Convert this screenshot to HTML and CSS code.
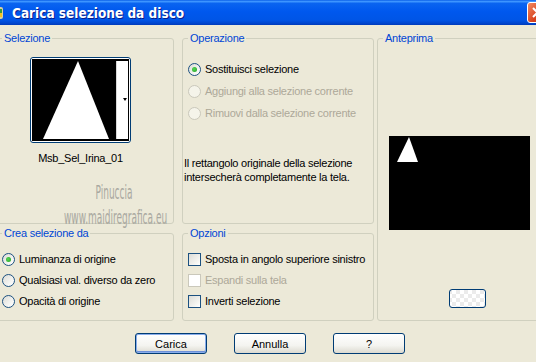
FILE: index.html
```html
<!DOCTYPE html>
<html>

<head>
    <title>Carica selezione da disco</title>
    <link rel="stylesheet" href="styles.css">
</head>

<body>
    <div class="titlebar">
        <svg class="app-icon" width="16" height="16" viewBox="0 0 16 16">
            <rect x="1" y="2" width="13" height="12" rx="2" fill="#d9cfa0" />
            <rect x="3" y="4" width="5" height="4" fill="#d23b2c" />
            <rect x="8" y="4" width="5" height="4" fill="#3a9b3a" />
            <rect x="3" y="8" width="10" height="4" fill="#f4c21e" />
        </svg>
        <span class="title">Carica selezione da disco</span>
        <div class="close">
            <svg width="21" height="21" viewBox="0 0 21 21">
                <path d="M6 6 L15 15 M15 6 L6 15" stroke="#fff" stroke-width="2" />
            </svg>
        </div>
    </div>

    <div class="panels">
        <fieldset class="group sel-group">
            <legend>Selezione</legend>
            <div class="thumb-wrap">
                <div class="thumb">
                    <div class="thumb-inner">
                        <svg width="92" height="78" viewBox="0 0 92 78">
                            <rect x="0" y="0" width="80" height="78" fill="#000" />
                            <polygon points="42,0 7,78 73,78" fill="#fff" />
                            <rect x="80" y="0" width="12" height="78" fill="#fff" />
                            <rect x="80" y="0" width="1" height="78" fill="#d8d8d8" />
                            <polygon points="87,37 91,37 89,40" fill="#000" />
                        </svg>
                    </div>
                </div>
                <div class="thumb-name">Msb_Sel_Irina_01</div>
            </div>
            <div class="watermark">
                <div class="wm-name">Pinuccia</div>
                <div class="wm-site">www.maidiregrafica.eu</div>
            </div>
        </fieldset>

        <fieldset class="group op-group">
            <legend>Operazione</legend>
            <div class="options">
                <label class="opt"><span class="radio checked"></span>Sostituisci selezione</label>
                <label class="opt disabled"><span class="radio"></span>Aggiungi alla selezione corrente</label>
                <label class="opt disabled"><span class="radio"></span>Rimuovi dalla selezione corrente</label>
            </div>
            <p class="info">Il rettangolo originale della selezione<br>intersecherà completamente la tela.</p>
        </fieldset>

        <fieldset class="group preview-group">
            <legend>Anteprima</legend>
            <div class="preview">
                <svg width="141" height="94" viewBox="0 0 141 94">
                    <rect width="141" height="94" fill="#000" />
                    <polygon points="20,1 8,26 29,26" fill="#fff" />
                </svg>
            </div>
            <div class="mini-btn"></div>
        </fieldset>

        <fieldset class="group src-group">
            <legend>Crea selezione da</legend>
            <div class="options tight">
                <label class="opt"><span class="radio checked"></span>Luminanza di origine</label>
                <label class="opt"><span class="radio"></span>Qualsiasi val. diverso da zero</label>
                <label class="opt"><span class="radio"></span>Opacità di origine</label>
            </div>
        </fieldset>

        <fieldset class="group opt-group">
            <legend>Opzioni</legend>
            <div class="options tight">
                <label class="opt"><span class="check"></span>Sposta in angolo superiore sinistro</label>
                <label class="opt disabled"><span class="check"></span>Espandi sulla tela</label>
                <label class="opt"><span class="check"></span>Inverti selezione</label>
            </div>
        </fieldset>
    </div>

    <div class="buttons">
        <button type="button" class="btn default">Carica</button>
        <button type="button" class="btn">Annulla</button>
        <button type="button" class="btn">?</button>
    </div>
</body>

</html>
```

FILE: styles.css
```css
body {
    margin: 0;
    width: 536px;
    height: 362px;
    overflow: hidden;
    background-color: #ece9d8;
    font-family: "Liberation Sans", Arial, sans-serif;
    font-size: 11px;
    letter-spacing: -0.25px;
    color: #000;
}

.titlebar {
    height: 25px;
    display: flex;
    align-items: center;
    background: linear-gradient(#0a5fe8 0%, #3d95ff 6%, #0a64f0 14%, #0058ee 45%, #0055e6 80%, #0047d0 92%, #003aba 100%);
    position: relative;
}

.app-icon {
    margin-left: -11px;
    margin-top: 1px;
}

.title {
    margin-left: 7px;
    color: #fff;
    font-family: "DejaVu Sans Condensed", "DejaVu Sans", sans-serif;
    font-weight: bold;
    font-size: 13.5px;
    letter-spacing: 0;
    text-shadow: 1px 1px #0a1e8a;
}

.close {
    position: absolute;
    left: 527px;
    top: 2px;
    width: 21px;
    height: 21px;
    box-sizing: border-box;
    border: 1px solid #fff;
    border-radius: 3px;
    background: linear-gradient(135deg, #f08a62, #d8421e 60%, #c23514);
}

.close svg {
    display: block;
    margin: -1px;
}

.panels {
    display: grid;
    grid-template-columns: 178px 8px 192px 3px 170px;
    grid-template-rows: 192px 94px;
    row-gap: 3px;
    margin: 7px 0 0 -4px;
}

.group {
    margin: 0;
    padding: 0;
    min-width: 0;
    border: 1px solid #d0d0bf;
    border-radius: 3px;
    position: relative;
}

.group legend {
    margin-left: 5px;
    padding: 0 2px;
    line-height: 13px;
    color: #0046d5;
}

.sel-group {
    grid-column: 1;
    grid-row: 1;
}

.op-group {
    grid-column: 3;
    grid-row: 1;
}

.preview-group {
    grid-column: 5;
    grid-row: 1 / 3;
}

.src-group {
    grid-column: 1;
    grid-row: 2;
}

.opt-group {
    grid-column: 3;
    grid-row: 2;
}

.thumb-wrap {
    width: 101px;
    margin: 12px 0 0 33px;
    display: flex;
    flex-direction: column;
    align-items: center;
}

.thumb {
    border: 1px solid #003c74;
    border-radius: 3px;
    padding: 1px;
    background-color: #fff;
}

.thumb-inner {
    border: 1px dotted #000;
    padding: 1px 0 1px 3px;
    background-color: #000;
}

.thumb-inner svg {
    display: block;
}

.thumb-name {
    margin-top: 9px;
    line-height: 13px;
}

.watermark {
    position: absolute;
    left: 67px;
    top: 136px;
    width: 200px;
    color: #a9a8a0;
    font-family: "DejaVu Sans Condensed", "Liberation Sans Narrow", sans-serif;
    letter-spacing: 0;
    text-align: center;
    transform: scaleX(0.5);
    transform-origin: left top;
}

.wm-name {
    font-size: 20px;
    line-height: 22px;
}

.wm-site {
    font-size: 20px;
    line-height: 22px;
    margin-top: 3px;
    white-space: nowrap;
}

.options {
    display: flex;
    flex-direction: column;
    gap: 9px;
    margin-top: 18px;
    padding-left: 5px;
}

.options.tight {
    gap: 8px;
    margin-top: 13px;
}

.opt {
    display: flex;
    align-items: center;
    gap: 4px;
    height: 13px;
    line-height: 13px;
    white-space: nowrap;
}

.opt.disabled {
    color: #aca899;
}

.radio {
    width: 13px;
    height: 13px;
    box-sizing: border-box;
    border: 1px solid #1c5180;
    border-radius: 50%;
    background: linear-gradient(135deg, #dcdcd6, #f7f7f5 70%, #fff);
    position: relative;
    flex: none;
}

.opt.disabled .radio {
    border-color: #cac8bb;
    background: #f5f4ea;
}

.radio.checked::after {
    content: "";
    position: absolute;
    left: 3px;
    top: 3px;
    width: 5px;
    height: 5px;
    border-radius: 50%;
    background: radial-gradient(circle at 40% 40%, #55d655, #21a121);
}

.check {
    width: 13px;
    height: 13px;
    box-sizing: border-box;
    border: 1px solid #1c5180;
    background: linear-gradient(135deg, #dcdcd7, #f5f5f1 70%, #fff);
    flex: none;
}

.opt.disabled .check {
    border-color: #cac8bb;
    background: #fff;
}

.info {
    margin: 36px 0 0 1px;
    line-height: 14px;
}

.preview {
    margin: 91px 0 0 11px;
}

.preview svg {
    display: block;
}

.mini-btn {
    width: 37px;
    height: 19px;
    box-sizing: border-box;
    margin: 59px 0 0 71px;
    border: 1px solid #003c74;
    border-radius: 3px;
    background:
        repeating-conic-gradient(#ffffff 0 25%, #ebebeb 0 50%) 10px 4px / 8px 8px,
        #fff;
}

.buttons {
    display: flex;
    gap: 27px;
    margin: 12px 0 0 135px;
}

.btn {
    width: 72px;
    height: 21px;
    padding: 0;
    border: 1px solid #003c74;
    border-radius: 3px;
    background: linear-gradient(#ffffff, #f4f4f0 60%, #dcdad0);
    font-family: "Liberation Sans", Arial, sans-serif;
    font-size: 11px;
    color: #000;
}

.btn.default {
    box-shadow: inset 0 0 0 1px #89adeb, inset 0 -1px 0 1px #6d90d8;
}
```
